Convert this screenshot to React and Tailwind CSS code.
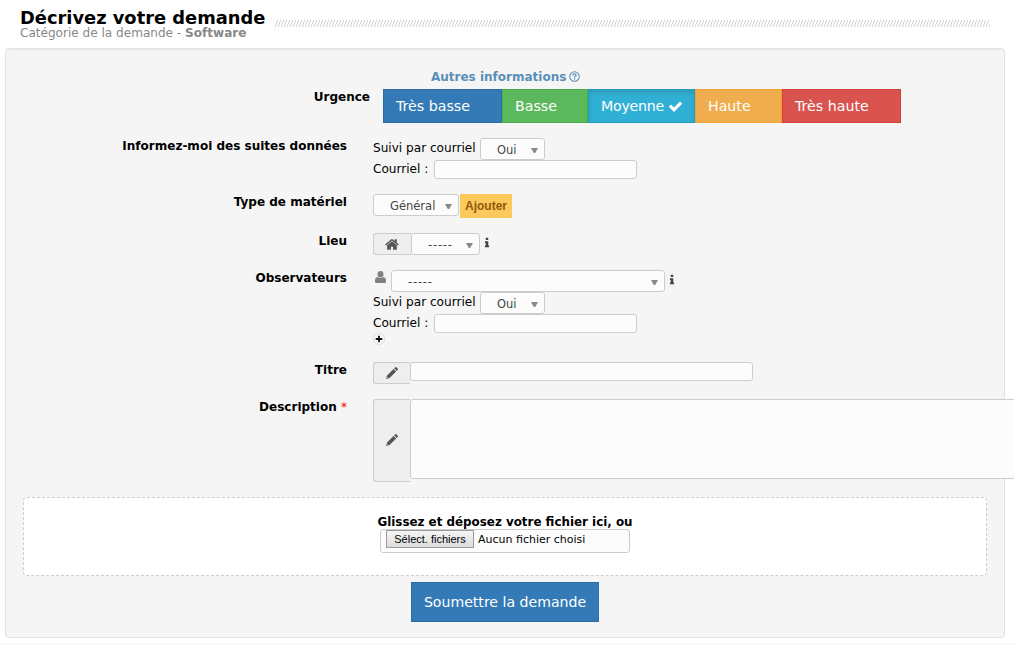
import React from 'react';

const icons = {
  home: 'M1408 992v480q0 26-19 45t-45 19h-384v-384h-256v384h-384q-26 0-45-19t-19-45v-480q0-1 .5-3t.5-3l575-474 575 474q1 2 1 6zm223-69l-62 74q-8 9-21 11h-3q-13 0-21-7l-692-577-692 577q-12 8-24 7-13-2-21-11l-62-74q-8-10-7-23.5t11-21.5l719-599q32-26 76-26t76 26l244 204v-195q0-14 9-23t23-9h192q14 0 23 9t9 23v408l219 182q10 8 11 21.5t-7 23.5z',
  check: 'M1671 566q0 40-28 68l-724 724-136 136q-28 28-68 28t-68-28l-136-136-362-362q-28-28-28-68t28-68l136-136q28-28 68-28t68 28l294 295 656-657q28-28 68-28t68 28l136 136q28 28 28 68z',
  info: 'M1216 1344v128q0 26-19 45t-45 19h-512q-26 0-45-19t-19-45v-128q0-26 19-45t45-19h64v-384h-64q-26 0-45-19t-19-45v-128q0-26 19-45t45-19h384q26 0 45 19t19 45v576h64q26 0 45 19t19 45zm-128-1152v192q0 26-19 45t-45 19h-256q-26 0-45-19t-19-45v-192q0-26 19-45t45-19h256q26 0 45 19t19 45z',
};

function Icon({ name, className }) {
  return (
    <svg viewBox="0 0 1792 1792" fill="currentColor" className={`shrink-0 ${className}`}>
      <path d={icons[name]} />
    </svg>
  );
}

function Pencil() {
  return (
    <svg viewBox="0 0 14 14" fill="currentColor" className="h-[14px] w-[14px] shrink-0">
      <path d="M10 1.4Q10.8.6 11.6 1.4L12.6 2.4Q13.4 3.2 12.6 4L11.7 4.9L9.1 2.3zM8.5 2.9L11.1 5.5L4.6 12L1 13L2 9.4zM2.5 10.7L2.1 11.9L3.3 11.5z" fillRule="evenodd" />
    </svg>
  );
}

function User() {
  return (
    <svg viewBox="0 0 14 14" className="h-[14px] w-[14px] shrink-0 fill-[#808080]">
      <ellipse cx="7.5" cy="4.2" rx="3" ry="3.2" />
      <path d="M4.5 6.9Q2 7.4 2 10.2V11.7Q2 13 3.3 13H11.7Q13 13 13 11.7V10.2Q13 7.4 10.5 6.9Q7.5 9.2 4.5 6.9z" />
    </svg>
  );
}

function Row({ label, className, children }) {
  return (
    <div className={`flex ${className}`}>
      <div className="w-[341px] shrink-0 text-right text-[12.03px] font-bold leading-4">{label}</div>
      <div className="ml-[26px] flex flex-col items-start">{children}</div>
    </div>
  );
}

function Select({ className, children }) {
  return (
    <div className={`flex h-[22px] shrink-0 items-center justify-between rounded-[3px] border border-[#ccc] bg-[#fcfcfc] pl-4 pr-[6px] pt-[3px] text-[11.5px] text-[#444] ${className}`}>
      <span>{children}</span>
      <svg viewBox="0 0 7 5" className="h-[5px] w-[7px] fill-[#888]"><path d="M0 0h7L4.2 5H2.8z" /></svg>
    </div>
  );
}

function MailFollowUp() {
  return (
    <>
      <div className="flex h-[22px]">
        <span className="w-[107px] text-[12.1px] leading-5">Suivi par courriel</span>
        <Select className="w-[65px]">Oui</Select>
      </div>
      <div className="flex h-5">
        <span className="w-[61px] text-[12.1px] leading-[18px]">Courriel :</span>
        <input className="h-[19px] w-[203px] rounded-[3px] border border-[#ccc] bg-[#fcfcfc]" />
      </div>
    </>
  );
}

const addon = 'flex shrink-0 items-center justify-center rounded-l-[3px] border border-r-0 border-[#ccc] bg-[#eee] text-[#555]';
const level = 'flex h-[34px] items-center border pl-3 pt-px text-[14.2px] text-white';

export default function App() {
  return (
    <div className="h-[645px] w-full overflow-hidden whitespace-nowrap bg-white font-['DejaVu_Sans',sans-serif] text-black">
      <header className="flex h-12 pl-5 pt-[7px]">
        <div className="w-[255px] shrink-0">
          <h1 className="text-[17.85px] font-bold leading-[21px]">Décrivez votre demande</h1>
          <p className="-mt-[3px] text-[12.07px] leading-4 text-[#888]">Catégorie de la demande - <b>Software</b></p>
        </div>
        <svg className="mt-[13px] h-[7px] w-[715px]">
          <defs>
            <pattern id="hatch" width="3" height="7" patternUnits="userSpaceOnUse">
              <path d="M0.3 7L2.7 0" stroke="#c4c4c4" strokeWidth="0.8" />
            </pattern>
          </defs>
          <rect width="715" height="7" fill="url(#hatch)" />
        </svg>
      </header>

      <main className="ml-[5px] h-[590px] w-[1000px] rounded border border-[#e3e3e3] bg-[#f5f5f5] shadow-[inset_0_1px_1px_rgba(0,0,0,0.05)]">
        <div className="flex h-10 items-center pl-[425px] pt-[15px] text-[12px] font-bold text-[#5a8fb8]">
          <span className="w-[138px] pt-px">Autres informations</span>
          <svg viewBox="0 0 12 12" className="h-[11px] w-[11px] fill-none stroke-current">
            <circle cx="6" cy="6" r="5.2" strokeWidth="1.1" />
            <path d="M4.3 4.8C4.3 2.7 7.8 2.7 7.8 4.7C7.8 5.8 6.1 5.8 6.1 7.1M6.1 8V9.3" strokeWidth="1.4" />
          </svg>
        </div>
        <div className="flex h-[49px]">
          <div className="w-[364px] text-right text-[12.03px] font-bold leading-4">Urgence</div>
          <div className="ml-[13px] flex">
            <div className={`${level} w-[119px] border-[#2e6da4] bg-[#337ab7]`}>Très basse</div>
            <div className={`${level} w-[86px] border-[#4cae4c] bg-[#5cb85c]`}>Basse</div>
            <div className={`${level} w-[107px] border-[#269abc] bg-[#31b0d5] shadow-[inset_0_3px_5px_rgba(0,0,0,0.125)]`}>
              <span className="w-[67px] tracking-[-0.25px]">Moyenne</span><Icon name="check" className="mb-px h-[15px] w-[15px]" />
            </div>
            <div className={`${level} w-[87px] border-[#eea236] bg-[#f0ad4e]`}>Haute</div>
            <div className={`${level} w-[119px] border-[#d43f3a] bg-[#d9534f]`}>Très haute</div>
          </div>
        </div>

        <Row label="Informez-moi des suites données" className="h-14"><MailFollowUp /></Row>

        <Row label="Type de matériel" className="h-[39px]">
          <div className="flex gap-px">
            <Select className="w-[86px]">Général</Select>
            <button className="h-6 w-[52px] bg-[#fec95c] font-['Liberation_Sans',sans-serif] text-[12px] font-bold text-[#8f5a0a]">Ajouter</button>
          </div>
        </Row>

        <Row label="Lieu" className="h-[37px]">
          <div className="flex">
            <div className={`${addon} h-[22px] w-[38px]`}><Icon name="home" className="h-[15px] w-[15px]" /></div>
            <Select className="w-[69px] tracking-[0.8px]">-----</Select>
            <Icon name="info" className="ml-px mt-1 h-3 w-3 text-[#444]" />
          </div>
        </Row>

        <Row label="Observateurs" className="h-[92px]">
          <div className="flex">
            <User />
            <Select className="ml-1 w-[274px] tracking-[0.8px]">-----</Select>
            <Icon name="info" className="ml-px mt-1 h-3 w-3 text-[#444]" />
          </div>
          <MailFollowUp />
          <svg viewBox="0 0 12 12" className="-mt-px h-3 w-3">
            <circle cx="6" cy="6" r="5.5" fill="#fafafa" stroke="#ddd" />
            <path d="M6 2.7v6.6M2.7 6h6.6" stroke="#111" strokeWidth="1.8" />
          </svg>
        </Row>

        <Row label="Titre" className="h-[37px]">
          <div className="flex">
            <div className={`${addon} h-[22px] w-[37px]`}><Pencil /></div>
            <input className="h-[19px] w-[343px] rounded-[3px] border border-[#ccc] bg-[#fcfcfc]" />
          </div>
        </Row>

        <Row label={<>Description <span className="font-normal text-[#ff0000]">*</span></>} className="h-[98px]">
          <div className="flex">
            <div className={`${addon} h-[83px] w-[37px] pb-px`}><Pencil /></div>
            <textarea className="h-20 w-[700px] shrink-0 resize-none rounded-[3px] border border-[#ccc] bg-[#fcfcfc]" />
          </div>
        </Row>

        <section className="ml-[17px] flex h-[79px] w-[964px] flex-col items-center rounded border border-dashed border-[#ccc] bg-white pt-[15px]">
          <p className="h-4 text-[11.9px] font-bold leading-[18px]">Glissez et déposez votre fichier ici, ou</p>
          <div className="flex h-6 w-[250px] rounded-[3px] border border-[#ccc] bg-[#fcfcfc] pl-[5px]">
            <button className="h-[18px] w-[88px] border border-[#999] bg-linear-to-b from-[#f5f5f5] to-[#dcdcdc] font-['Liberation_Sans',sans-serif] text-[11px] leading-4">Sélect. fichiers</button>
            <span className="ml-1 text-[11px] leading-5">Aucun fichier choisi</span>
          </div>
        </section>
        <button className="ml-[405px] mt-[6px] h-10 w-[188px] border border-[#2e6da4] bg-[#337ab7] pt-px text-[14.1px] text-white">Soumettre la demande</button>
      </main>
      <div className="mt-[5px] h-[2px] bg-[#f9f9f6]" />
    </div>
  );
}
